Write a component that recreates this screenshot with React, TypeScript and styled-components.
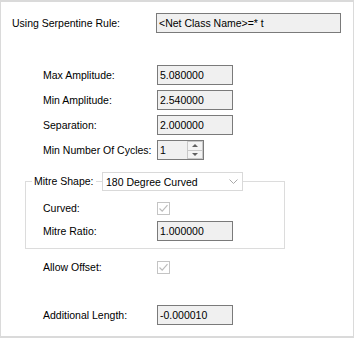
import React from 'react';
import styled, { createGlobalStyle } from 'styled-components';

const GlobalStyle = createGlobalStyle`
  html, body {
    margin: 0;
    padding: 0;
    background: #ffffff;
  }
  body {
    font-family: 'Liberation Sans', Arial, sans-serif;
    font-size: 10.5px;
    color: #000000;
  }
`;

const fields = [
  { label: 'Max Amplitude:', value: '5.080000' },
  { label: 'Min Amplitude:', value: '2.540000' },
  { label: 'Separation:', value: '2.000000' },
];

const CheckMark = () => (
  <svg width="11" height="11" viewBox="0 0 11 11">
    <polyline points="1.5,5.5 4.2,8.2 9.5,2.2" fill="none" stroke="#bcbcbc" strokeWidth="1.2" />
  </svg>
);

const App = () => {
  return (
    <>
      <GlobalStyle />
      <SCpanel>
        <SCruleRow>
          <SClabel>Using Serpentine Rule:</SClabel>
          <SCruleBox>&lt;Net Class Name&gt;=* t</SCruleBox>
        </SCruleRow>

        <SCfieldList>
          {fields.map((f) => (
            <SCrow key={f.label}>
              <SClabel>{f.label}</SClabel>
              <SCtextBox>{f.value}</SCtextBox>
            </SCrow>
          ))}
          <SCrow>
            <SClabel>Min Number Of Cycles:</SClabel>
            <SCspinner>
              <SCspinValue>1</SCspinValue>
              <SCspinButtons>
                <SCspinButton>
                  <SCarrow $up />
                </SCspinButton>
                <SCspinButton>
                  <SCarrow />
                </SCspinButton>
              </SCspinButtons>
            </SCspinner>
          </SCrow>
        </SCfieldList>

        <SCgroupWrap>
          <SCgroup>
            <SClegend>Mitre Shape:</SClegend>
            <SCgroupBody>
              <SCrow>
                <SClabel>Curved:</SClabel>
                <SCcheck>
                  <CheckMark />
                </SCcheck>
              </SCrow>
              <SCrow>
                <SClabel>Mitre Ratio:</SClabel>
                <SCtextBox>1.000000</SCtextBox>
              </SCrow>
            </SCgroupBody>
          </SCgroup>
          <SCcombo>
            <span>180 Degree Curved</span>
            <svg width="9" height="5" viewBox="0 0 9 5">
              <polyline points="0.5,0.5 4.5,4.5 8.5,0.5" fill="none" stroke="#a8a8a8" strokeWidth="1" />
            </svg>
          </SCcombo>
        </SCgroupWrap>

        <SCoffsetRow>
          <SClabel>Allow Offset:</SClabel>
          <SCcheck>
            <CheckMark />
          </SCcheck>
        </SCoffsetRow>

        <SClengthRow>
          <SClabel>Additional Length:</SClabel>
          <SCtextBox>-0.000010</SCtextBox>
        </SClengthRow>
      </SCpanel>
    </>
  );
};

const SCpanel = styled.div`
  box-sizing: border-box;
  width: 354px;
  height: 338px;
  border-style: solid;
  border-color: #dadada;
  border-width: 2px 1px 2px 1px;
  background: #ffffff;
  display: flex;
  flex-direction: column;
`;

const SClabel = styled.span`
  white-space: nowrap;
  line-height: 20px;
`;

const SCruleRow = styled.div`
  display: grid;
  grid-template-columns: 144px 185px;
  align-items: center;
  height: 20px;
  margin-top: 11px;
  padding-left: 11px;
`;

const SCbox = styled.div`
  box-sizing: border-box;
  height: 20px;
  border: 1px solid #7a7a7a;
  background: #f0f0f0;
  padding-left: 2px;
  line-height: 18px;
  white-space: nowrap;
`;

const SCruleBox = styled(SCbox)``;

const SCtextBox = styled(SCbox)`
  width: 76px;
`;

const SCfieldList = styled.div`
  display: flex;
  flex-direction: column;
  gap: 5px;
  margin-top: 32px;
  padding-left: 42px;
`;

const SCrow = styled.div`
  display: grid;
  grid-template-columns: 114px auto;
  justify-content: start;
  align-items: center;
  height: 20px;
`;

const SCspinner = styled.div`
  box-sizing: border-box;
  display: flex;
  width: 47px;
  height: 20px;
  border: 1px solid #7a7a7a;
  background: #f0f0f0;
`;

const SCspinValue = styled.span`
  flex: 1;
  padding-left: 2px;
  line-height: 18px;
`;

const SCspinButtons = styled.div`
  display: flex;
  flex-direction: column;
  width: 16px;
`;

const SCspinButton = styled.div`
  flex: 1;
  display: flex;
  align-items: center;
  justify-content: center;
  box-sizing: border-box;
  border: 1px solid #c8c8c8;
  background: #f3f3f3;
  & + & {
    border-top: none;
  }
`;

const SCarrow = styled.span<{ $up?: boolean }>`
  width: 0;
  height: 0;
  border-left: 3px solid transparent;
  border-right: 3px solid transparent;
  ${(p) => (p.$up ? 'border-bottom: 3px solid #606060;' : 'border-top: 3px solid #606060;')}
`;

const SCgroupWrap = styled.div`
  position: relative;
  margin-top: 12px;
  margin-left: 24px;
  width: 260px;
`;

const SCgroup = styled.fieldset`
  box-sizing: border-box;
  width: 260px;
  margin: 0;
  padding: 7px 0 7px 6px;
  border: 1px solid #dcdcdc;
  min-inline-size: 0;
`;

const SClegend = styled.legend`
  padding: 0 2px;
  line-height: 19px;
`;

const SCgroupBody = styled.div`
  display: flex;
  flex-direction: column;
  gap: 3px;
  padding-left: 11px;
`;

const SCcombo = styled.div`
  position: absolute;
  top: 0;
  left: 77px;
  box-sizing: border-box;
  width: 141px;
  height: 19px;
  border: 1px solid #d9d9d9;
  background: #ffffff;
  display: flex;
  align-items: center;
  justify-content: space-between;
  padding: 0 4px 0 3px;
  white-space: nowrap;
`;

const SCcheck = styled.span`
  box-sizing: border-box;
  width: 13px;
  height: 13px;
  border: 1px solid #c4c4c4;
  background: #ffffff;
  display: flex;
  align-items: center;
  justify-content: center;
`;

const SCoffsetRow = styled(SCrow)`
  margin-top: 8px;
  padding-left: 42px;
`;

const SClengthRow = styled(SCrow)`
  margin-top: 28px;
  padding-left: 42px;
`;

export default App;
